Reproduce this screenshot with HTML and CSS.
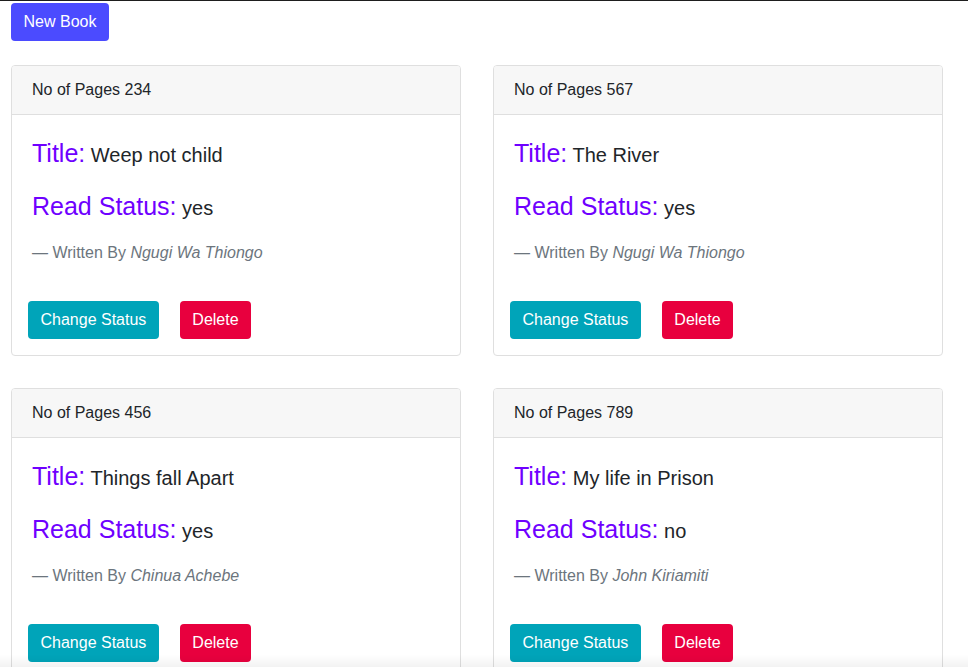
FILE: index.html
```html
<!DOCTYPE html>
<html lang="en">
<head>
<meta charset="utf-8">
<title>Books</title>
<link rel="stylesheet" href="styles.css">
</head>
<body>
<div class="page">
  <button class="btn btn-new">New Book</button>
  <div class="grid">
    <div class="card">
      <div class="card-header">No of Pages 234</div>
      <div class="card-body">
        <p class="field"><span class="label">Title:</span><span class="value"> Weep not child</span></p>
        <p class="field"><span class="label">Read Status:</span><span class="value"> yes</span></p>
        <p class="footer">— Written By <cite>Ngugi Wa Thiongo</cite></p>
      </div>
      <div class="actions">
        <button class="btn btn-info">Change Status</button>
        <button class="btn btn-danger">Delete</button>
      </div>
    </div>
    <div class="card">
      <div class="card-header">No of Pages 567</div>
      <div class="card-body">
        <p class="field"><span class="label">Title:</span><span class="value"> The River</span></p>
        <p class="field"><span class="label">Read Status:</span><span class="value"> yes</span></p>
        <p class="footer">— Written By <cite>Ngugi Wa Thiongo</cite></p>
      </div>
      <div class="actions">
        <button class="btn btn-info">Change Status</button>
        <button class="btn btn-danger">Delete</button>
      </div>
    </div>
    <div class="card">
      <div class="card-header">No of Pages 456</div>
      <div class="card-body">
        <p class="field"><span class="label">Title:</span><span class="value"> Things fall Apart</span></p>
        <p class="field"><span class="label">Read Status:</span><span class="value"> yes</span></p>
        <p class="footer">— Written By <cite>Chinua Achebe</cite></p>
      </div>
      <div class="actions">
        <button class="btn btn-info">Change Status</button>
        <button class="btn btn-danger">Delete</button>
      </div>
    </div>
    <div class="card">
      <div class="card-header">No of Pages 789</div>
      <div class="card-body">
        <p class="field"><span class="label">Title:</span><span class="value"> My life in Prison</span></p>
        <p class="field"><span class="label">Read Status:</span><span class="value"> no</span></p>
        <p class="footer">— Written By <cite>John Kiriamiti</cite></p>
      </div>
      <div class="actions">
        <button class="btn btn-info">Change Status</button>
        <button class="btn btn-danger">Delete</button>
      </div>
    </div>
  </div>
</div>
<div class="fade"></div>
</body>
</html>
```
FILE: styles.css
```css
html, body {
  margin: 0;
  padding: 0;
}
body {
  font-family: "Liberation Sans", Arial, sans-serif;
  font-size: 16px;
  line-height: 24px;
  color: #212529;
  background: #fff;
  border-top: 1px solid #1e1e1e;
}
.page {
  padding: 2px 0 40px 11px;
}
.btn {
  display: inline-block;
  font-family: "Liberation Sans", Arial, sans-serif;
  font-size: 16px;
  line-height: 24px;
  padding: 7px 12.5px;
  border: 0;
  border-radius: 4px;
  color: #fff;
  cursor: pointer;
}
.btn-new {
  background: #4b4bff;
}
.btn-info {
  background: #00a4b9;
}
.btn-danger {
  background: #e8003e;
  margin-left: 21px;
}
.grid {
  margin-top: 24px;
  display: grid;
  grid-template-columns: 450px 450px;
  column-gap: 32px;
  row-gap: 32px;
}
.card {
  border: 1px solid #dfdfdf;
  border-radius: 4px;
  background: #fff;
  overflow: hidden;
}
.card-header {
  background: #f7f7f7;
  border-bottom: 1px solid #dfdfdf;
  padding: 12px 20px;
  line-height: 24px;
}
.card-body {
  padding: 20px;
}
.field {
  margin: 0 0 17px;
  font-size: 25px;
  line-height: 36px;
  height: 36px;
}
.field + .field {
  margin-bottom: 17px;
}
.label {
  color: #6f00ff;
}
.value {
  font-size: 20px;
  line-height: 1;
  color: #212529;
}
.footer {
  margin: 0;
  color: #6c757d;
  font-size: 16px;
  line-height: 24px;
}
.footer cite {
  font-style: italic;
}
.actions {
  padding: 16px 16px 16px 16px;
  display: flex;
}
.fade {
  position: fixed;
  left: 0;
  right: 0;
  bottom: 0;
  height: 12px;
  background: linear-gradient(rgba(0,0,0,0), rgba(0,0,0,0.05));
  pointer-events: none;
}
```
